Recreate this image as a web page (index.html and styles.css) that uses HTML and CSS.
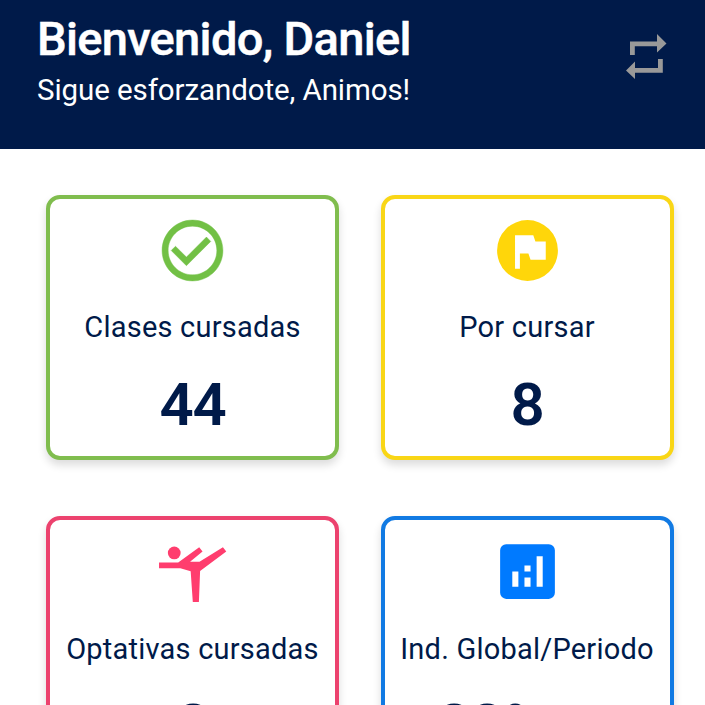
FILE: index.html
```
<!DOCTYPE html>
<html lang="es">
<head>
<meta charset="utf-8">
<title>Bienvenido</title>
<link rel="stylesheet" href="styles.css">
</head>
<body>
<header class="header">
  <div>
    <h1 class="title">Bienvenido, Daniel</h1>
    <p class="subtitle">Sigue esforzandote, Animos!</p>
  </div>
  <svg class="repeat" viewBox="0 0 41 46"><path d="M4 22V8.500H31V1L40.500 10.500L31 19.500V13.200H8.800V22ZM36.800 26V39.700H9V46L0 37.500L9 28.500V35H32V26Z"/></svg>
</header>
<main class="grid">
  <section class="card green">
    <svg class="icon check" viewBox="0 0 24 24"><path d="M16.590 7.580L10 14.170l-3.590-3.580L5 12l5 5 8-8zM12 2C6.480 2 2 6.480 2 12s4.480 10 10 10 10-4.480 10-10S17.520 2 12 2zm0 18c-4.420 0-8-3.580-8-8s3.580-8 8-8 8 3.580 8 8-3.580 8-8 8z"/></svg>
    <h2 class="label">Clases cursadas</h2>
    <p class="value">44</p>
  </section>
  <section class="card yellow">
    <svg class="icon" viewBox="0 0 24 24"><path fill-rule="evenodd" d="M12 2a10 10 0 1 0 0 20a10 10 0 0 0 0-20zM18 15h-5l-.7-2H9.500v5H7.900V7h6l.7 2H18z"/></svg>
    <h2 class="label">Por cursar</h2>
    <p class="value">8</p>
  </section>
  <section class="card pink">
    <svg class="icon" viewBox="0 0 24 24"><circle cx="6" cy="5.900" r="2.100"/><path d="M1 9H7.300L14.200 4L15.300 5.400L11.200 8.800H14.300L22 4L23.100 5.400L14.500 11.800L14.100 22H12.100L11.400 11.900L8 10.900H1Z"/></svg>
    <h2 class="label lower">Optativas cursadas</h2>
    <p class="value">8</p>
  </section>
  <section class="card blue">
    <svg class="icon" viewBox="0 0 24 24"><path fill-rule="evenodd" d="M5 3h14a2 2 0 0 1 2 2v14a2 2 0 0 1-2 2H5a2 2 0 0 1-2-2V5a2 2 0 0 1 2-2zM7 12v5h2v-5zm4 2v3h2v-3zm0-4v2h2v-2zm4-3v10h2V7z"/></svg>
    <h2 class="label lower">Ind. Global/Periodo</h2>
    <p class="value pair">88%</p>
  </section>
</main>
</body>
</html>
```
FILE: styles.css
```
* { box-sizing: border-box; margin: 0; }
body { height: 705px; overflow: hidden; background: #fff; color: #001a49; font-family: Roboto, sans-serif; }
.header { display: flex; justify-content: space-between; height: 149px; padding: 11px 38px 0 37px; background: #001a49; color: #fff; }
.title { font-size: 47px; line-height: 56px; font-weight: 500; letter-spacing: -0.68px; white-space: nowrap; -webkit-text-stroke: .5px #fff; }
.subtitle { margin-top: 5px; font-size: 29.500px; line-height: 36px; letter-spacing: -0.09px; white-space: nowrap; }
.repeat { width: 41px; height: 46px; margin-top: 22px; fill: #999; }
.grid { display: grid; grid-template-columns: 293px 293px; grid-auto-rows: 265px; gap: 56px 41.500px; height: 556px; overflow: hidden; padding: 46px 0 0 46px; }
.card { display: flex; flex-direction: column; align-items: center; padding-top: 15px; border: 4px solid; border-radius: 14px; background: #fff; box-shadow: 0 5px 8px rgba(0, 0, 0, .14); }
.green { border-color: #80bd4e; }
.green .icon { fill: #72c045; }
.check { stroke: #72c045; stroke-width: .15px; }
.yellow { border-color: #f9d616; }
.yellow .icon { fill: #ffd60a; }
.pink { border-color: #ec426e; }
.pink .icon { fill: #ff3d6e; }
.blue { border-color: #117ae3; }
.blue .icon { fill: #007aff; }
.icon { width: 73px; height: 73px; flex: none; }
.label { margin-top: 22px; font-size: 29px; line-height: 36px; font-weight: 400; letter-spacing: .22px; white-space: nowrap; }
.lower { margin-top: 23px; }
.value { margin-top: 24.500px; font-size: 60px; line-height: 70px; font-weight: 600; letter-spacing: -1.200px; }
.lower + .value { margin-top: 23.500px; }
.pair { width: 180px; }
```
